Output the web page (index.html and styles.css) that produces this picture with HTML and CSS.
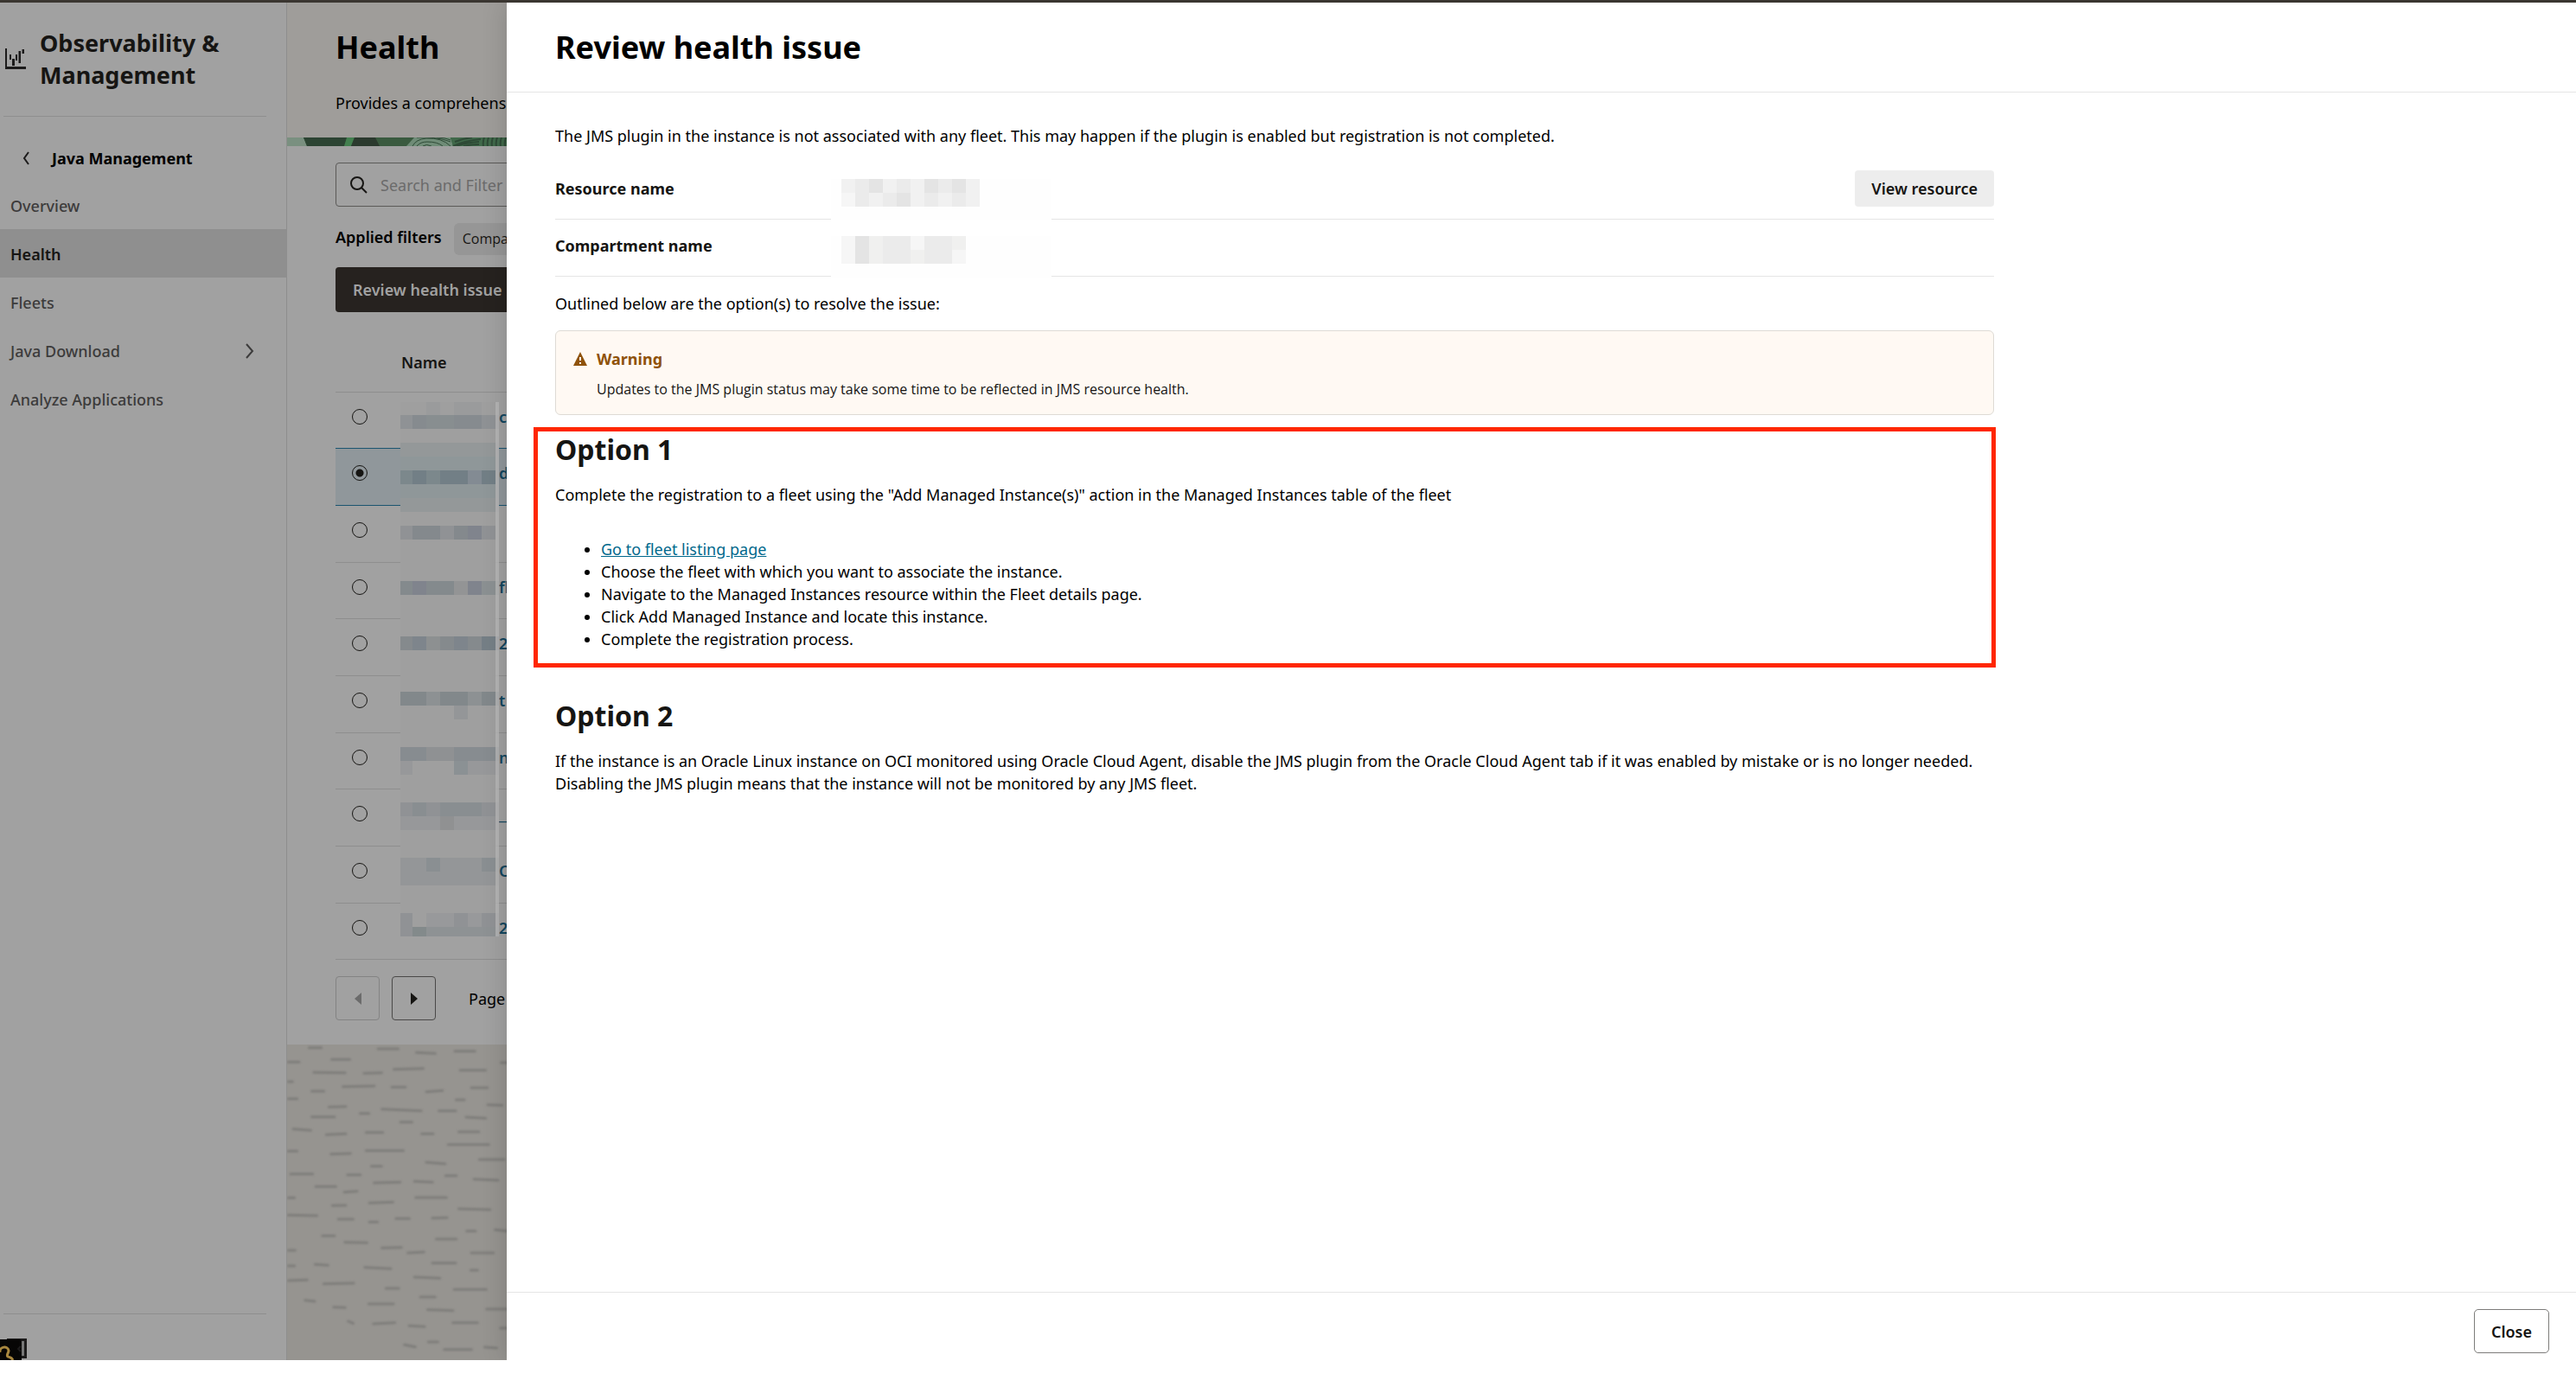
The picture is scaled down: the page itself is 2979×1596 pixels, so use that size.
FILE: index.html
```html
<!DOCTYPE html>
<html lang="en">
<head>
<meta charset="utf-8">
<title>Health - Review health issue</title>
<link rel="stylesheet" href="styles.css">
</head>
<body>
<div class="app">
  <aside class="sidebar">
    <div class="service">
      <svg class="service-icon" width="24" height="24" viewBox="0 0 24 24" fill="#1c1b1b" aria-hidden="true"><path d="M0 0h2v21h22v3H0zM5 7h2v6H5zM8 12h3v8H8zM12 7h2v7h-2zM15.500 3h2.500v14h-2.500zM19.500 1h2.500v5h-2.500z"/></svg>
      <h2 class="service-name">Observability &amp; Management</h2>
    </div>
    <a class="back" href="#">
      <svg width="8" height="16" viewBox="0 0 8 16" fill="none" stroke="#1c1b1b" stroke-width="2" aria-hidden="true"><path d="M7 1 2 8l5 7"/></svg>
      Java Management
    </a>
    <nav class="nav">
      <a href="#">Overview</a>
      <a href="#" class="current">Health</a>
      <a href="#">Fleets</a>
      <a href="#">Java Download
        <svg width="10" height="18" viewBox="0 0 10 18" fill="none" stroke="#3c3b3b" stroke-width="2" aria-hidden="true"><path d="m1 1 7 8-7 8"/></svg>
      </a>
      <a href="#">Analyze Applications</a>
    </nav>
    <div class="sidebar-foot">
      <svg width="34" height="25" viewBox="0 0 34 25" aria-hidden="true">
        <path d="M9.500 1.500h20v20h-20z" fill="#777" stroke="#1c1b1b" stroke-width="3"/>
        <path d="M0 1h22q3 0 3 3v21H0z" fill="#070605"/><path d="m24 9-3 3 3 3" fill="none" stroke="#1c1b1b" stroke-width="2"/>
        <path d="M0 16c-1-7 9-8 10-2 0 3-3 5-1 7 2 1 4 0 6 4" fill="none" stroke="#a9883f" stroke-width="3"/>
      </svg>
    </div>
  </aside>

  <main class="main">
    <header class="page-head">
      <h1>Health</h1>
      <p>Provides a comprehensive view</p>
    </header>
    <div class="strip">
      <svg width="255" height="10" viewBox="0 0 255 10" aria-hidden="true">
        <path d="M0 0h255v10H0z" fill="#3a5a3f"/><path d="M0 0h19l4 10H0z" fill="#7a9080"/><path d="M19 0h51l-4 10H23z" fill="#2c4433"/>
        <path d="M69 0h9l-4 10h-8z" fill="#43804f"/><path d="M78 0h24l5 10H74z" fill="#2b3a2e"/>
        <path d="M147 0h42l3 10h-54z" fill="#6f8c77"/><path d="M189 0h66v10h-63z" fill="#40694a"/>
        <g fill="none" stroke="#2e4a36"><path d="M145 10q4-8 16-9 18-1 28 9M150 10q4-5 12-5 12 0 18 5M157 10q4-3 10 0M150 0q24-1 39 5M173 0q10 0 16 3" stroke-width="1"/>
        <path d="M192 10q12-6 32-8M196 10q10-4 26-5M204 10q8-2 18-2M194 5q10-4 20-5M228 0q-2 5-1 10M233 0q-2 5-1 10M238 0q-2 5-1 10M243 0q-2 5-1 10M248 0q-2 5-1 10M253 0q-2 5-1 10" stroke-width="2"/></g>
      </svg>
    </div>
    <section class="listing">
      <label class="search">
        <svg width="20" height="20" viewBox="0 0 20 20" fill="none" stroke="#161513" stroke-width="2" aria-hidden="true"><circle cx="8" cy="8" r="7"/><path d="m13 13 6 6"/></svg>
        <input type="text" placeholder="Search and Filter" aria-label="Search and Filter">
      </label>
      <div class="filters"><span class="filters-label">Applied filters</span><span class="tag">Compartment</span></div>
      <button class="primary" type="button">Review health issue</button>
      <div class="table-wrap">
        <table>
          <thead><tr><th class="pick"></th><th>Name</th></tr></thead>
          <tbody>
            <tr><td><input type="radio" name="row" aria-label="Row 1"></td><td><a href="#">ca</a></td></tr>
            <tr class="selected"><td><input type="radio" name="row" aria-label="Row 2" checked></td><td><a href="#">d</a></td></tr>
            <tr><td><input type="radio" name="row" aria-label="Row 3"></td><td></td></tr>
            <tr><td><input type="radio" name="row" aria-label="Row 4"></td><td><a href="#">fl</a></td></tr>
            <tr><td><input type="radio" name="row" aria-label="Row 5"></td><td><a href="#">2</a></td></tr>
            <tr><td><input type="radio" name="row" aria-label="Row 6"></td><td><a href="#">t</a></td></tr>
            <tr><td><input type="radio" name="row" aria-label="Row 7"></td><td><a href="#">n</a></td></tr>
            <tr><td><input type="radio" name="row" aria-label="Row 8"></td><td><a href="#">__</a></td></tr>
            <tr><td><input type="radio" name="row" aria-label="Row 9"></td><td><a href="#">C</a></td></tr>
            <tr><td><input type="radio" name="row" aria-label="Row 10"></td><td><a href="#">2</a></td></tr>
          </tbody>
        </table>
        <svg class="redaction" width="114" height="618" viewBox="0 0 114 618" shape-rendering="crispEdges" aria-hidden="true">
          <path d="M0 0h110v618H0z" fill="#9f9f9f"/>
          <path d="M30 0h16v15H30zM62 0h32v15H62z" fill="#9a9b9c"/>
          <path d="M0 15h14v16H0zM94 15h20v16H94z" fill="#8f9295"/><path d="M14 15h80v16H14z" fill="#868b8f"/><path d="M30 15h32v16H30z" fill="#888e90"/>
          <path d="M0 47h114v80H0z" fill="#949899"/><path d="M0 63h114v48H0z" fill="#8f9799"/>
          <path d="M0 79h14v16H0zM30 79h16v16H30z" fill="#7c888c"/><path d="M14 79h16v16H14zM46 79h32v16H46zM94 79h16v16H94z" fill="#727f86"/><path d="M78 79h16v16H78z" fill="#838b93"/>
          <path d="M0 143h14v16H0zM46 143h16v16H46zM94 143h16v16H94z" fill="#909295"/><path d="M14 143h32v16H14zM62 143h16v16H62z" fill="#84898d"/><path d="M78 143h16v16H78z" fill="#80848d"/>
          <path d="M0 207h14v16H0zM30 207h32v16H30z" fill="#848a8d"/><path d="M14 207h16v16H14zM78 207h16v16H78z" fill="#80848d"/><path d="M62 207h16v16H62z" fill="#939495"/><path d="M94 207h20v16H94z" fill="#8b9092"/>
          <path d="M0 271h14v16H0zM46 271h16v16H46zM78 271h16v16H78z" fill="#858a8d"/><path d="M14 271h16v16H14zM62 271h16v16H62z" fill="#7e858c"/><path d="M30 271h16v16H30z" fill="#8d9091"/><path d="M94 271h20v16H94z" fill="#757f86"/>
          <path d="M0 335h30v16H0zM46 335h32v16H46zM94 335h20v16H94z" fill="#82888b"/><path d="M30 335h16v16H30zM78 335h16v16H78z" fill="#8d9193"/><path d="M62 351h16v16H62z" fill="#949698"/>
          <path d="M0 399h30v16H0zM62 399h52v16H62z" fill="#878c90"/><path d="M30 399h32v16H30z" fill="#8f9193"/><path d="M0 415h14v16H0zM78 415h36v16H78z" fill="#97989a"/><path d="M62 415h16v16H62z" fill="#8b9194"/>
          <path d="M0 463h14v16H0zM30 463h16v16H30zM94 463h20v16H94z" fill="#909295"/><path d="M14 463h16v16H14zM46 463h48v16H46z" fill="#898e91"/><path d="M0 479h114v16H0z" fill="#97989a"/><path d="M46 479h16v16H46z" fill="#909192"/>
          <path d="M0 527h114v32H0z" fill="#949698"/><path d="M30 527h16v16H30zM94 527h20v16H94z" fill="#8a8f92"/>
          <path d="M0 591h14v27H0zM62 591h16v27H62zM94 591h20v27H94z" fill="#909295"/><path d="M30 591h32v27H30zM78 591h16v27H78z" fill="#98999b"/><path d="M14 607h16v11H14z" fill="#838a8b"/><path d="M30 607h84v11H30z" fill="#8e9294"/>
          <path d="M110 0h4v618h-4z" fill="#b8b8b8" opacity=".8"/>
        </svg>
      </div>
      <div class="pager">
        <button type="button" disabled aria-label="Previous page"><svg width="8" height="14" viewBox="0 0 8 14" fill="#6b6b6b"><path d="M8 0v14L0 7z"/></svg></button>
        <button type="button" aria-label="Next page"><svg width="8" height="14" viewBox="0 0 8 14" fill="#161513"><path d="M0 0v14l8-7z"/></svg></button>
        <span class="page-label">Page</span>
      </div>
    </section>
    <div class="texture">
      <svg width="255" height="365" viewBox="865 84 666 1095" preserveAspectRatio="none" fill="none" stroke="#7f7e7b" stroke-width="9" stroke-linecap="round" aria-hidden="true"><path d="M932 95h36M1140 99h60M1256 112l56 3M1372 107h60M1000 136h54M869 145h32M1188 170l88-3M1388 173h76M946 181l94 1M1098 184l52-2M869 213h12M1034 230l94-2M1182 232h40M1286 248l48-4M1422 234h48M940 246h36M869 272h26M1376 276h24M992 301l50-2M1472 293l42 2M1086 323h26M1152 308l118 6M1324 314h50M940 335h68M1208 353h34M1406 336l58 4M884 377l52 5M984 397l58-3M1104 389h50M1272 394h34M1384 387h60M1352 431h122M869 454h26M998 464l58-2M1104 452h112M1286 493l56 5M1446 483h74M1120 506h30M876 533h66M1048 536h38M1128 564l78-2M1250 559l54 3M1344 539h32M1430 551l72 4M952 577h60M1038 596l38-3M869 616h18M1254 615h92M1002 643l40-1M1114 634l70-3M1384 654l94 3M869 676l86 2M1020 690h44M1114 700h24M1194 688h40M1304 686l44-1M1408 731h26M1494 727l36 4M972 748h36M1040 770l66 2M1152 790l58-2M1316 759h60M1230 807l48-3M1422 807h66M869 798h20M1304 842h70M869 852h18M950 847l38 3M1100 857l78 5M1420 867h20M1250 891l76 4M869 903l56-2M976 914l90-2M1164 930h38M1370 934h96M1268 960h44M920 971l28 4M1006 995l34 2M1112 984h74M1290 1004l76 3M1468 1002h60M1050 1044l14 7M1126 1053l64-4M1234 1060l46 3M1366 1049h74M1510 1068h18M1292 1116h28M1220 1126l32 7M1340 1142h82M1462 1134l36 3M1512 147h16"/></svg>
    </div>
  </main>

  <section class="drawer" role="dialog" aria-labelledby="drawer-title">
    <header class="drawer-head"><h2 id="drawer-title">Review health issue</h2></header>
    <div class="drawer-body">
      <p>The JMS plugin in the instance is not associated with any fleet. This may happen if the plugin is enabled but registration is not completed.</p>
      <dl class="details">
        <div class="detail">
          <dt>Resource name</dt>
          <dd><svg width="255" height="48" viewBox="0 0 255 48" shape-rendering="crispEdges" aria-hidden="true"><path d="M0 0h255v48H0z" fill="#fefefe"/><path d="M12 0h160v32H12z" fill="#ebebeb"/><path d="M12 0h16v16H12zM60 0h16v16H60zM92 0h16v16H92zM156 0h16v32h-16zM44 16h16v16H44zM92 16h16v16H92zM124 16h16v16h-16z" fill="#f1f1f1"/><path d="M12 16h16v16H12z" fill="#f6f6f6"/><path d="M44 0h16v16H44zM108 0h16v16h-16zM140 0h16v16h-16zM76 16h16v16H76z" fill="#e4e4e4"/></svg></dd>
          <dd class="action"><button class="secondary" type="button">View resource</button></dd>
        </div>
        <div class="detail">
          <dt>Compartment name</dt>
          <dd><svg width="255" height="48" viewBox="0 0 255 48" shape-rendering="crispEdges" aria-hidden="true"><path d="M0 0h255v48H0z" fill="#fefefe"/><path d="M12 0h144v32H12z" fill="#ebebeb"/><path d="M12 0h16v32H12zM92 0h16v16H92zM140 16h16v16h-16z" fill="#f6f6f6"/><path d="M44 0h16v32H44zM92 16h16v16H92zM140 0h16v16h-16z" fill="#f0f0ef"/><path d="M28 0h16v32H28z" fill="#e4e4e4"/></svg></dd>
        </div>
      </dl>
      <p>Outlined below are the option(s) to resolve the issue:</p>
      <div class="warning" role="note">
        <svg width="16" height="16" viewBox="0 0 16 16" aria-hidden="true"><path d="M8 0l8 16H0z" fill="#8f520a"/><path d="M7 6h2v4H7zM7 12h2v2H7z" fill="#fff9f3"/></svg>
        <div>
          <h3>Warning</h3>
          <p>Updates to the JMS plugin status may take some time to be reflected in JMS resource health.</p>
        </div>
      </div>
      <section class="option highlighted">
        <h3>Option 1</h3>
        <p>Complete the registration to a fleet using the "Add Managed Instance(s)" action in the Managed Instances table of the fleet</p>
        <ul>
          <li><a href="#">Go to fleet listing page</a></li>
          <li>Choose the fleet with which you want to associate the instance.</li>
          <li>Navigate to the Managed Instances resource within the Fleet details page.</li>
          <li>Click Add Managed Instance and locate this instance.</li>
          <li>Complete the registration process.</li>
        </ul>
      </section>
      <section class="option">
        <h3>Option 2</h3>
        <p>If the instance is an Oracle Linux instance on OCI monitored using Oracle Cloud Agent, disable the JMS plugin from the Oracle Cloud Agent tab if it was enabled by mistake or is no longer needed. Disabling the JMS plugin means that the instance will not be monitored by any JMS fleet.</p>
      </section>
    </div>
    <footer class="drawer-foot"><button class="close" type="button">Close</button></footer>
  </section>
</div>
</body>
</html>
```
FILE: styles.css
```css
* { box-sizing: border-box; }
body {
  margin: 0;
  background: #fff;
  color: #000;
  font: 18px/26px "Noto Sans", "Open Sans", sans-serif;
}
h1, h2, h3, p, dl, dd, ul { margin: 0; }
button, input { font: inherit; color: inherit; margin: 0; }
svg { display: block; flex: none; }

.app {
  position: relative;
  display: flex;
  min-height: calc(100vh - 23px);
  border-top: 3px solid #3a3631;
  background: #a1a1a1;
  overflow: hidden;
}

/* Sidebar */
.sidebar {
  flex: none;
  width: 332px;
  display: flex;
  flex-direction: column;
  border-right: 1px solid #8e8e8e;
}
.service {
  display: flex;
  align-items: center;
  gap: 16px;
  margin: 0 23px 0 4px;
  padding: 28px 0 29px 2px;
  border-bottom: 1px solid #8e8e8e;
}
.service-name { color: #161513; font-size: 27px; line-height: 37px; }
.back {
  display: flex;
  align-items: center;
  gap: 26px;
  padding: 35px 0 13px 26px;
  color: #000;
  font-weight: 700;
  text-decoration: none;
}
.nav a {
  display: flex;
  justify-content: space-between;
  align-items: center;
  padding: 16px 37px 14px 12px;
  color: #3c3b3b;
  font-weight: 500;
  text-decoration: none;
}
.nav .current { background: #8f8f8f; color: #161513; font-weight: 600; }
.sidebar-foot {
  margin: auto 23px 0 4px;
  padding-top: 28px;
  border-top: 1px solid #8e8e8e;
}
.sidebar-foot svg { margin-left: -4px; }

/* Page behind the drawer */
.main { flex: 1; min-width: 0; display: flex; flex-direction: column; }
.page-head { padding: 30px 56px 27px; background: #9f9d9a; }
.page-head h1 { font-size: 36px; line-height: 44px; }
.page-head p { margin-top: 29px; }
.strip { background: #40694a; }
.listing { padding: 19px 56px 28px; }
.search {
  display: flex;
  align-items: center;
  gap: 15px;
  height: 51px;
  padding: 0 16px;
  border: 1px solid #5b5a58;
  border-radius: 4px;
}
.search input { flex: 1; padding: 0; border: 0; outline: 0; background: none; }
.search input::placeholder { color: #6b6b6b; opacity: 1; }
.filters { display: flex; gap: 14px; margin-top: 19px; }
.filters-label { font-weight: 600; line-height: 32px; }
.tag {
  padding: 0 10px;
  border-radius: 6px;
  background: #969696;
  color: #161513;
  font: 16px/37px "Open Sans", sans-serif;
}
.primary {
  display: block;
  margin-top: 14px;
  padding: 13px 20px;
  border: 0;
  border-radius: 4px;
  background: #26221f;
  color: #a1a1a1;
  font-weight: 600;
}
.table-wrap { position: relative; }
table { width: 100%; border-collapse: separate; border-spacing: 0; }
th {
  padding: 45px 0 21px;
  border-bottom: 1px solid #8e8e8e;
  color: #161513;
  font-weight: 600;
  text-align: left;
}
.pick { width: 76px; }
td {
  height: 66px;
  padding: 15px 0 0 113px;
  border-bottom: 1px solid #8e8e8e;
  vertical-align: top;
}
tr:nth-child(3n + 1) td { height: 65px; }
td:first-child { padding: 19px 0 0 19px; }
td a { color: #13465e; font-weight: 600; text-decoration: none; }
.selected td { background: #90979b; border-bottom-color: #1b5470; }
.selected td { box-shadow: 0 -1px #1b5470; }
td input {
  appearance: none;
  display: block;
  width: 18px;
  height: 18px;
  border: 1px solid #161513;
  border-radius: 50%;
}
td input:checked { background: radial-gradient(circle, #161513 4px, transparent 5px); }
.redaction { position: absolute; left: 75px; bottom: 27px; }
.pager { display: flex; align-items: center; gap: 14px; margin-top: 19px; }
.pager button {
  display: grid;
  place-items: center;
  width: 51px;
  height: 51px;
  padding: 0;
  border: 1px solid #4a4948;
  border-radius: 4px;
  background: none;
}
.pager button:disabled { border-color: #838383; }
.page-label { margin-left: 24px; }
.texture { flex: 1; background: #969490; overflow: hidden; }
.texture svg { filter: blur(1px); }

/* Drawer over the page */
.drawer {
  position: absolute;
  inset: 0 0 0 586px;
  display: flex;
  flex-direction: column;
  background: #fff;
  box-shadow: 0 0 28px rgba(0, 0, 0, 0.16);
}
.drawer-head { padding: 30px 56px 29px; border-bottom: 1px solid #e5e5e5; }
.drawer-head h2 { font-size: 36px; line-height: 44px; }
.drawer-body { flex: 1; max-width: 1776px; padding: 37px 56px; }
.details { margin: 18px 0; }
.detail {
  display: flex;
  height: 66px;
  padding: 9px 0 0;
  border-bottom: 1px solid #e5e5e5;
  line-height: 42px;
}
dt { width: 319px; color: #161513; font-weight: 700; }
.detail svg { margin-top: 10px; }
.action { margin-left: auto; }
.secondary {
  display: block;
  padding: 8px 19px;
  border: 0;
  border-radius: 4px;
  background: #ededed;
  color: #161513;
  font-weight: 600;
  line-height: 26px;
}
.warning {
  display: flex;
  gap: 11px;
  margin-top: 18px;
  padding: 19px 20px 17px;
  border: 1px solid #dedbd5;
  border-radius: 6px;
  background: #fff9f3;
}
.warning svg { margin-top: 5px; }
.warning h3 { color: #8f520a; font-size: 18px; line-height: 26px; }
.warning p {
  margin-top: 10px;
  color: #161513;
  font: 16px/24px "Open Sans", sans-serif;
}
.option { margin-top: 36px; }
.option h3 { color: #161513; font-size: 32px; line-height: 40px; }
.option p { margin-top: 19px; }
.option ul { margin-top: 37px; padding-left: 53px; }
.option a { color: #00688c; }
.highlighted {
  margin: 14px -2px 0 -25px;
  padding: 1px 20px 15px;
  border: 5px solid #ff2600;
}
.drawer-foot {
  display: flex;
  justify-content: flex-end;
  padding: 19px 31px 8px;
  border-top: 1px solid #e5e5e5;
}
.close {
  height: 51px;
  padding: 0 19px;
  border: 1px solid #7d7c7a;
  border-radius: 5px;
  background: #fff;
  color: #161513;
  font-weight: 600;
}
```
